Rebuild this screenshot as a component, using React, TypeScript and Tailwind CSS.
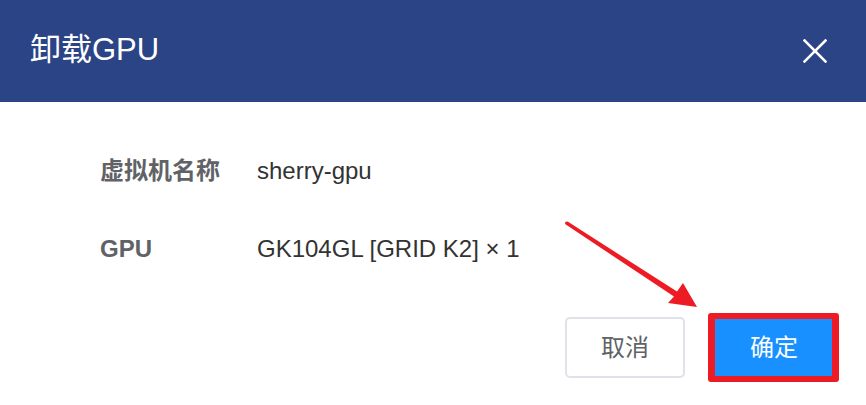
const rows = [
  { label: '虚拟机名称', value: 'sherry-gpu' },
  { label: 'GPU', value: 'GK104GL [GRID K2] × 1' },
]

export default function App() {
  return (
    <div
      className="relative w-[866px] h-[405px] bg-white overflow-hidden"
      style={{ fontFamily: '"Liberation Sans", "Noto Sans CJK SC", sans-serif' }}
    >
      {/* Header */}
      <div className="h-[102px] bg-[#2b4485] flex items-center justify-between pl-[30px] pr-[39px]">
        <h2 className="text-[31px] text-white leading-none pb-[4px]">卸载GPU</h2>
        <button className="text-white">
          <svg width="24" height="24" viewBox="0 0 24 24" stroke="currentColor" strokeWidth="2.6" strokeLinecap="square">
            <line x1="1.5" y1="1.5" x2="22.5" y2="22.5" />
            <line x1="22.5" y1="1.5" x2="1.5" y2="22.5" />
          </svg>
        </button>
      </div>

      {/* Body */}
      <div className="pt-[53px] pl-[100px] flex flex-col gap-[46px]">
        {rows.map(r => (
          <div key={r.label} className="flex items-center h-[32px] text-[24px]">
            <span className="w-[157px] font-bold text-[#606266]">{r.label}</span>
            <span className="text-[#333333]">{r.value}</span>
          </div>
        ))}
      </div>

      {/* Footer */}
      <div className="flex justify-end gap-[29px] pr-[32px] mt-[52px]">
        <button className="w-[120px] h-[61px] rounded-[5px] border-2 border-[#dfe2e8] bg-white text-[24px] text-[#606266]">
          取消
        </button>
        <div className="relative">
          <button className="w-[120px] h-[61px] rounded-[5px] bg-[#1890ff] text-[24px] text-white">
            确定
          </button>
          <div className="absolute -left-[6px] -right-[5px] -top-[4px] -bottom-[4px] border-x-[7px] border-y-[6px] border-[#ed1c24] rounded-[3px] pointer-events-none" />
        </div>
      </div>

      {/* annotation arrow */}
      <svg className="absolute inset-0 pointer-events-none" width="866" height="405" viewBox="0 0 866 405">
        <polygon
          points="567.6,221.6 677,291.5 683,283 697,307 668,303 674,296.5 565.8,224.6"
          fill="#ed1c24"
        />
        <circle cx="566.7" cy="223.1" r="1.7" fill="#ed1c24" />
      </svg>
    </div>
  )
}
